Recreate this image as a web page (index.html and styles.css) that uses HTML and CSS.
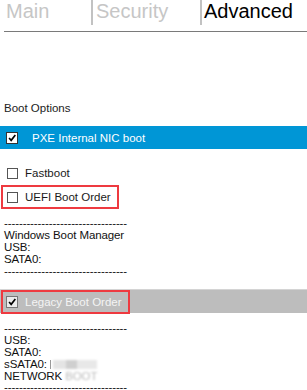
FILE: index.html
```html
<!DOCTYPE html>
<html lang="en">
<head>
  <meta charset="UTF-8">
  <meta name="viewport" content="width=device-width, initial-scale=1.0">
  <title>BIOS Setup - Advanced</title>
  <link rel="stylesheet" href="styles.css">
</head>
<body>
  <div class="tabs">
    <div class="tab tab-first">Main</div>
    <div class="tab">Security</div>
    <div class="tab active">Advanced</div>
  </div>

  <div class="section-title">Boot Options</div>

  <div class="option selected">
    <span class="check checked">
      <svg viewBox="0 0 12 12" width="12" height="12"><path d="M2.5 6 L5 8.8 L10 2.5" /></svg>
    </span>
    <span class="label">PXE Internal NIC boot</span>
  </div>

  <div class="option plain">
    <span class="check"></span>
    <span class="label">Fastboot</span>
  </div>

  <div class="option plain marked">
    <span class="check"></span>
    <span class="label">UEFI Boot Order</span>
  </div>

  <div class="boot-list">
    <div>---------------------------------</div>
    <div>Windows Boot Manager</div>
    <div>USB:</div>
    <div>SATA0:</div>
    <div>---------------------------------</div>
  </div>

  <div class="option disabled">
    <div class="marked-inner">
      <span class="check checked">
        <svg viewBox="0 0 12 12" width="12" height="12"><path d="M2.5 6 L5 8.8 L10 2.5" /></svg>
      </span>
      <span class="label">Legacy Boot Order</span>
    </div>
  </div>

  <div class="boot-list second">
    <div>---------------------------------</div>
    <div>USB:</div>
    <div>SATA0:</div>
    <div>sSATA0: <span class="cursor"></span><span class="smudge"></span></div>
    <div>NETWORK <span class="blurred">BOOT</span></div>
    <div class="last">---------------------------------</div>
  </div>
</body>
</html>
```

FILE: styles.css
```css
* {
  margin: 0;
  padding: 0;
  box-sizing: border-box;
}

body {
  font-family: "Liberation Sans", Arial, sans-serif;
  font-size: 11.5px;
  color: #111;
  background: #fff;
  width: 307px;
  overflow: hidden;
}

/* tab strip */
.tabs {
  display: flex;
  align-items: flex-start;
  height: 32px;
  margin-left: 4px;
  border-bottom: 1px solid #7a7a7a;
}

.tab {
  font-size: 20px;
  line-height: 22px;
  height: 25px;
  color: #c6c6c6;
  border-left: 2px solid #c2c2c2;
  padding-left: 3px;
  width: 109px;
}

.tab-first {
  border-left: none;
  padding-left: 2px;
  width: 87px;
}

.tab.active {
  color: #000;
  width: auto;
  padding-left: 2px;
}

.section-title {
  margin-top: 69px;
  padding-left: 4px;
  line-height: 14px;
  color: #222;
}

/* option rows */
.option {
  display: flex;
  align-items: center;
  height: 24px;
}

.option .label {
  line-height: 14px;
}

.selected {
  margin-top: 11px;
  height: 23px;
  background: #0096d6;
  color: #fff;
  padding-left: 6px;
}

.selected .label {
  margin-left: 14px;
}

.plain {
  padding-left: 7px;
}

.plain .label {
  margin-left: 7px;
  color: #1a1a1a;
}

.selected + .plain {
  margin-top: 12px;
}

.marked {
  width: 118px;
  margin-left: 1px;
  padding-left: 4px;
  border: 2px solid #ee3a40;
}

.check {
  display: inline-flex;
  align-items: center;
  justify-content: center;
  width: 11px;
  height: 11px;
  border: 1px solid #555;
  background: #fff;
  flex-shrink: 0;
}

.check.checked {
  width: 12px;
  height: 12px;
  border: 1px solid #333;
}

.check svg {
  display: block;
}

.check svg path {
  fill: none;
  stroke: #000;
  stroke-width: 2;
}

/* boot order lists */
.boot-list {
  margin-top: 8px;
  padding-left: 4px;
  line-height: 12px;
  color: #111;
  letter-spacing: -0.1px;
}

.boot-list.second {
  margin-top: 9px;
}

.boot-list .last {
  line-height: 10px;
}

.disabled {
  margin-top: 12px;
  background: #bdbdbd;
  border-top: 1px solid #d4d4d4;
}

.marked-inner {
  display: flex;
  align-items: center;
  width: 129px;
  height: 24px;
  margin-left: 1px;
  padding-left: 3px;
  border: 2px solid #ee3a40;
}

.disabled .check {
  background: #ececec;
  border-color: #777;
}

.disabled .label {
  margin-left: 7px;
  color: #f4f4f4;
}

.cursor {
  display: inline-block;
  width: 1px;
  height: 9px;
  background: #999;
  vertical-align: -1px;
}

.smudge {
  display: inline-block;
  width: 44px;
  height: 9px;
  margin-left: 2px;
  vertical-align: -1px;
  background: linear-gradient(90deg, #e4e4e4 0 30%, #cfcfcf 30% 55%, #e8e8e8 55% 100%);
  filter: blur(1px);
}

.blurred {
  color: #bbb;
  filter: blur(1px);
}
```
